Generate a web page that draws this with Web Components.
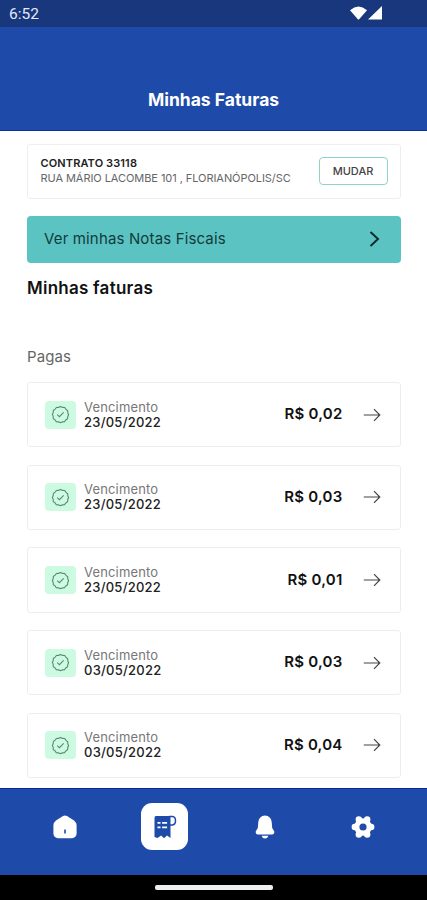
<!DOCTYPE html>
<html lang="pt-BR">
<head>
<meta charset="utf-8">
<title>Minhas Faturas</title>
<style>
html, body { margin: 0; height: 100%; }
body { background: #fff; font-family: Inter, "Liberation Sans", sans-serif; color: #111; overflow: hidden; }
</style>
</head>
<body>
<invoice-app></invoice-app>
<script>
const define = (name, html) => customElements.define(name, class extends HTMLElement {
  constructor() {
    super();
    const t = document.createElement('template');
    t.innerHTML = html;
    this.attachShadow({ mode: 'open' }).append(t.content.cloneNode(true));
  }
});

define('status-bar', `
<style>
:host { display: flex; box-sizing: border-box; height: 26.5px; background: #18377c; color: #e4eaf8; padding: 0 44px 0 9px; align-items: center; justify-content: space-between; font: 400 15.5px/20px Roboto, sans-serif; }
span { padding-top: 2px; }
svg { display: block; width: 34px; height: 16px; }
</style>
<span>6:52</span>
<svg viewBox="0 0 34 16" fill="#fff"><path d="M1 5.200Q9.500-2.200 18 5.200L10.400 14Q9.500 15 8.600 14Z"/><path d="M33 1v13.500H19Z"/></svg>`);

define('page-header', `
<style>
:host { display: flex; box-sizing: border-box; height: 104px; background: #1e4aa9; border-bottom: 1.5px solid #0b2f9b; color: #fff; align-items: flex-end; justify-content: center; padding-bottom: 19px; font-size: 17.5px; line-height: 22px; font-weight: 700; letter-spacing: 0; }
</style>
<slot></slot>`);

define('contract-card', `
<style>
:host { display: flex; box-sizing: border-box; height: 55px; border: 1.5px solid #eee; border-radius: 3px; padding: 0 12.5px 0 12.5px; align-items: center; justify-content: space-between; }
div { display: grid; font-size: 11px; line-height: 15px; white-space: nowrap; padding-bottom: 1px; }
b { font-weight: 600; color: #222; letter-spacing: .12px; }
span { color: #666; letter-spacing: -.06px; }
button { box-sizing: border-box; width: 69px; height: 28px; padding: 0 0 1px; border: 1.5px solid #8fd3c9; border-radius: 4px; background: #fff; color: #444; font: 500 11px/14px Inter, sans-serif; }
</style>
<div><b><slot name="title"></slot></b><span><slot name="address"></slot></span></div><button>MUDAR</button>`);

define('notes-link', `
<style>
:host { display: flex; box-sizing: border-box; height: 47.5px; border-radius: 4px; background: #5bc3c1; padding: 0 20px 0 17px; align-items: center; justify-content: space-between; font-size: 15px; color: #123b3d; letter-spacing: .15px; }
span { padding-bottom: 2px; }
svg { width: 14px; height: 18px; margin-bottom: 1px; }
</style>
<span><slot></slot></span>
<svg viewBox="0 0 14 18" fill="none" stroke="#082a2d" stroke-width="1.9"><path d="M3.500 2l7.500 7-7.500 7"/></svg>`);

define('invoice-row', `
<style>
:host { display: flex; box-sizing: border-box; height: 65.5px; border: 1.5px solid #ededed; border-radius: 3px; padding: 0 19px 0 17px; align-items: center; }
.badge { display: grid; place-items: center; width: 31px; height: 28px; border-radius: 4px; background: #cdfbe2; }
.badge svg { width: 19px; height: 19px; }
.info { display: grid; margin-left: 8px; flex: 1; line-height: 15px; }
.label { font-size: 13px; color: #777; letter-spacing: .15px; }
.date { font-size: 13px; color: #222; font-weight: 500; letter-spacing: .25px; }
.price { font-size: 15px; font-weight: 600; color: #111; padding-bottom: 1.5px; letter-spacing: .22px; margin-right: -.5px; }
.arrow { width: 18px; height: 14px; margin-left: 21px; }
</style>
<div class="badge"><svg viewBox="0 0 19 19" fill="none" stroke="#5a8975" stroke-width="1.100"><path d="M9.500 1.400l2 1 2.200.1 1.300 1.900 1.700 1.400.1 2.200.8 1.500-.8 2-.2 2.200-1.800 1.300-1.300 1.800-2.100.1-1.900.8-2-.8-2.200-.2-1.200-1.800-1.800-1.300-.1-2.200-.8-1.900.8-2 .2-2.100 1.800-1.300 1.200-1.600 2.200-.1z"/><path d="M6.200 9.700l2.200 2 4.300-4.300"/></svg></div>
<div class="info"><span class="label">Vencimento</span><span class="date"><slot name="date"></slot></span></div>
<div class="price"><slot name="price"></slot></div>
<svg class="arrow" viewBox="0 0 18 14" fill="none" stroke="#444" stroke-width="1.200"><path d="M.8 7h16M11 1.200L16.800 7 11 12.800"/></svg>`);

define('bottom-nav', `
<style>
:host { display: grid; box-sizing: border-box; height: 87px; grid-template-columns: 98px 101px 99px 98px; padding: 0 15px 9.5px 16px; align-items: center; justify-items: center; background: #1e4aa9; border-top: 1.5px solid #0b26a4; }
svg { display: block; width: 26px; height: 26px; }
.active { display: grid; place-items: center; width: 47px; height: 47px; border-radius: 11px; background: #fff; }
</style>
<svg viewBox="0 0 26 26"><path fill="#fff" d="M11 2.100q2-1 4 0l7 4.400q2.400 1.700 2.600 5v8q-.3 4.400-4.600 4.700H6q-4.300-.3-4.600-4.700v-8q.2-3.300 2.600-5z"/><path d="M13 15.500v4" stroke="#1e4aa9" stroke-width="1.600"/></svg>
<div class="active"><svg viewBox="0 0 26 26"><path fill="#1e4aa9" d="M4 2h14.500v22l-3.500-2.500-3 2.800-2.800-2.800L5.500 24 2.500 23V4Q2.500 2 4 2z"/><path d="M5.500 8.800h3m1.600 0h5M5.500 13.300h3m1.600 0h5" stroke="#fff" stroke-width="1.700"/><path d="M17 2.500h3.500q3 .5 3 4.200t-3 4.200H18" fill="none" stroke="#1e4aa9" stroke-width="1.500"/></svg></div>
<svg viewBox="0 0 26 26" fill="#fff"><path d="M13 1.500Q19 2 19.700 8l.5 6 2 3.200q.6 3-2.200 3.300H6q-2.800-.3-2.200-3.300l2-3.200.5-6Q7 2 13 1.500zM9.600 21.700h6.800q-.8 2.800-3.400 2.800t-3.400-2.800z"/></svg>
<svg viewBox="0 0 26 26"><g fill="#fff"><circle cx="13" cy="13" r="8.800"/><circle cx="21.200" cy="13" r="3.200"/><circle cx="17.200" cy="5.500" r="3.200"/><circle cx="8.800" cy="5.500" r="3.200"/><circle cx="4.800" cy="13" r="3.200"/><circle cx="8.800" cy="20.500" r="3.200"/><circle cx="17.200" cy="20.500" r="3.200"/></g><circle cx="13" cy="13" r="3.600" fill="#1e4aa9"/></svg>`);

define('gesture-bar', `
<style>
:host { display: flex; height: 25.5px; background: #000; justify-content: center; align-items: center; }
i { width: 118px; height: 5px; border-radius: 2px; background: #eee; }
</style><i></i>`);

const rows = [['23/05/2022', '0,02'], ['23/05/2022', '0,03'], ['23/05/2022', '0,01'], ['03/05/2022', '0,03'], ['03/05/2022', '0,04']];
define('invoice-app', `
<style>
:host { display: flex; flex-direction: column; width: 427px; height: 900px; }
main { flex: 1; min-height: 0; padding: 13px 26px 0 27px; overflow: hidden; }
notes-link { margin-top: 17px; }
h2 { margin: 13.500px 0 0; font-size: 17px; line-height: 22px; font-weight: 600; letter-spacing: .25px; color: #111; }
h3 { margin: 48.200px 0 0; font-size: 15px; line-height: 20px; font-weight: 400; letter-spacing: .1px; color: #666; }
section { display: grid; gap: 17.150px; margin-top: 15.300px; }
</style>
<status-bar></status-bar>
<page-header>Minhas Faturas</page-header>
<main>
<contract-card><span slot="title">CONTRATO 33118</span><span slot="address">RUA MÁRIO LACOMBE 101 , FLORIANÓPOLIS/SC</span></contract-card>
<notes-link>Ver minhas Notas Fiscais</notes-link>
<h2>Minhas faturas</h2>
<h3>Pagas</h3>
<section>${rows.map(([d, p]) => `<invoice-row><span slot="date">${d}</span><span slot="price">R$ ${p}</span></invoice-row>`).join('')}</section>
</main>
<bottom-nav></bottom-nav>
<gesture-bar></gesture-bar>`);
</script>
</body>
</html>
